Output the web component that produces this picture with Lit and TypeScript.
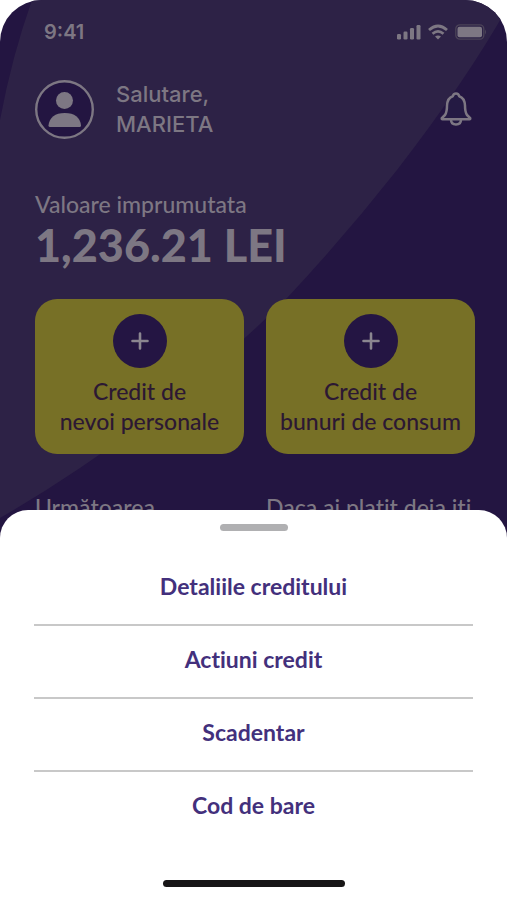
import { LitElement, html, svg, css } from "lit";
import { customElement } from "lit/decorators.js";

const plus = svg`<path d="M9 1.500v15M1.500 9h15" stroke="currentColor" stroke-width="2.600" stroke-linecap="round"/>`;

@customElement("app-root")
class AppRoot extends LitElement {
  static styles = css`
    :host {
      display: block;
      background: #fff;
      font-family: Lato, "Noto Sans", sans-serif;
      font-variant-ligatures: none;
    }
    * {
      box-sizing: border-box;
    }
    button {
      font: inherit;
      font-variant-ligatures: none;
      color: inherit;
      border: 0;
      background: none;
      padding: 0;
      cursor: pointer;
    }
    p,
    h1,
    ul {
      margin: 0;
      padding: 0;
    }
    svg {
      display: block;
    }
    .phone {
      min-height: 100vh;
      display: flex;
      flex-direction: column;
    }
    .home {
      position: relative;
      padding: 20px 32px 48px 35px;
      border-radius: 42px 42px 0 0;
      overflow: hidden;
      background: #231541;
      color: #7d7783;
    }
    .backdrop {
      position: absolute;
      inset: 0;
      width: 100%;
      height: 100%;
    }
    .content {
      position: relative;
    }
    .status {
      display: flex;
      justify-content: space-between;
      align-items: center;
      height: 24px;
      padding: 0 0 0 9px;
      margin-right: -12px;
      font: 600 20px/24px Inter, sans-serif;
    }
    .signals {
      display: flex;
      align-items: center;
      gap: 7px;
    }
    .profile {
      display: flex;
      align-items: center;
      gap: 22px;
      margin-top: 35px;
      font: 500 22px/30px Inter, sans-serif;
    }
    .hello {
      flex: 1;
    }
    .bell {
      margin-right: 3px;
    }
    .label {
      margin-top: 50px;
      font-size: 23px;
      line-height: 30px;
      font-weight: 500;
    }
    .amount {
      font-size: 45px;
      line-height: 52px;
      font-weight: 900;
    }
    .cards {
      display: grid;
      grid-template-columns: 1fr 1fr;
      gap: 22px;
      margin-top: 28px;
    }
    .card {
      display: flex;
      flex-direction: column;
      align-items: center;
      gap: 8px;
      min-height: 155px;
      padding: 15px 0;
      border-radius: 22px;
      background: #777026;
      color: #2c1833;
      font-size: 23px;
      line-height: 30px;
      font-weight: 500;
      white-space: nowrap;
    }
    .add {
      display: grid;
      place-items: center;
      width: 54px;
      height: 54px;
      flex: none;
      border-radius: 50%;
      background: #241543;
      color: #8b8690;
    }
    .next {
      display: grid;
      grid-template-columns: 1fr 1fr;
      gap: 22px;
      margin-top: 38px;
      font-size: 23px;
      line-height: 30px;
      font-weight: 500;
      white-space: nowrap;
    }
    .sheet {
      position: relative;
      flex: 1;
      display: flex;
      flex-direction: column;
      align-items: center;
      margin-top: -60px;
      padding: 14px 34px 13px;
      border-radius: 28px 28px 0 0;
      background: #fff;
    }
    .grip {
      width: 68px;
      height: 7px;
      border-radius: 4px;
      background: #b0b0b2;
      flex: none;
    }
    .menu {
      list-style: none;
      width: 100%;
      margin-top: 22px;
      margin-bottom: 30px;
    }
    .item + .item {
      border-top: 2px solid #c8c8c8;
    }
    .action {
      display: block;
      width: 100%;
      height: 71px;
      padding-bottom: 6px;
      color: #43307c;
      font-size: 23px;
      font-weight: 700;
      line-height: 30px;
    }
    .indicator {
      width: 182px;
      height: 7px;
      flex: none;
      margin-top: auto;
      border-radius: 4px;
      background: #171516;
    }
  `;

  private actions = ["Detaliile creditului", "Actiuni credit", "Scadentar", "Cod de bare"];
  private credits = [
    ["Credit de", "nevoi personale"],
    ["Credit de", "bunuri de consum"],
  ];

  render() {
    return html`
      <div class="phone">
        <main class="home">
          <svg class="backdrop" viewBox="0 0 507 570" preserveAspectRatio="none" aria-hidden="true">
            <path
              fill="#2d2246"
              d="M32 0H507V8Q468 78 397 170Q345 236 288 297Q190 394 80 468Q40 495 0 518V120Q12 56 32 0Z"
            />
          </svg>
          <div class="content">
            <div class="status">
              <span>9:41</span>
              <div class="signals">
                <svg width="24" height="16" viewBox="0 0 24 16" fill="currentColor" aria-label="Semnal">
                  <rect x="0" y="10" width="4" height="5.500" rx="1.200" />
                  <rect x="6.500" y="7.500" width="4" height="8" rx="1.200" />
                  <rect x="13" y="4" width="4" height="11.500" rx="1.200" />
                  <rect x="19.500" y="1" width="4" height="14.500" rx="1.200" />
                </svg>
                <svg width="20" height="16" viewBox="0 0 20 16" fill="none" stroke="currentColor" stroke-width="2.800" aria-label="Wi-Fi">
                  <path d="M1 6Q10-2 19 6M4.500 9.800Q10 5 15.500 9.800" />
                  <path d="M7 12.600Q10 10.300 13 12.600L10 15.600Z" fill="currentColor" stroke="none" />
                </svg>
                <svg width="32" height="16" viewBox="0 0 32 16" aria-label="Baterie">
                  <rect x=".8" y=".8" width="28" height="14.400" rx="4" fill="none" stroke="#4b4358" stroke-width="1.300" />
                  <rect x="2.500" y="2.800" width="24.500" height="10.400" rx="2" fill="currentColor" />
                  <path d="M30 5.500q2 2.500 0 5z" fill="#4b4358" />
                </svg>
              </div>
            </div>
            <div class="profile">
              <svg width="59" height="59" viewBox="0 0 59 59" aria-hidden="true">
                <circle cx="29.500" cy="29.500" r="28.300" fill="#231541" stroke="currentColor" stroke-width="2.400" />
                <circle cx="29.500" cy="20.500" r="8.500" fill="currentColor" />
                <path d="M13.500 45.500Q15 33 29.800 33T46 45.500Q46 47 44.500 47H15Q13.500 47 13.500 45.500Z" fill="currentColor" />
              </svg>
              <p class="hello">Salutare,<br />MARIETA</p>
              <button class="bell" aria-label="Notificari">
                <svg width="32" height="34" viewBox="0 0 32 34" fill="#241a43" stroke="currentColor" stroke-width="2.500" stroke-linejoin="round">
                  <path d="M11 27.500Q11 32.500 16 32.500T21 27.500" />
                  <path d="M16 1.500Q13.300 1.500 12.800 4.300Q7.500 6 7 13.500Q7 20 5 23L1.800 26.200Q1.500 27.200 2.500 27.200H29.500Q30.500 27.200 30.200 26.200L27 23Q25 20 25 13.500Q24.500 6 19.200 4.300Q18.700 1.500 16 1.500Z" />
                </svg>
              </button>
            </div>
            <p class="label">Valoare imprumutata</p>
            <h1 class="amount">1,236.21 LEI</h1>
            <div class="cards">
              ${this.credits.map(
                ([first, second]) => html`
                  <button class="card">
                    <span class="add"><svg width="18" height="18" viewBox="0 0 18 18">${plus}</svg></span>
                    <span>${first}<br />${second}</span>
                  </button>
                `
              )}
            </div>
            <div class="next">
              <span>Următoarea</span>
              <span>Daca ai platit deja iti</span>
            </div>
          </div>
        </main>
        <section class="sheet" aria-label="Actiuni">
          <div class="grip"></div>
          <ul class="menu">
            ${this.actions.map((label) => html`<li class="item"><button class="action">${label}</button></li>`)}
          </ul>
          <div class="indicator"></div>
        </section>
      </div>
    `;
  }
}
